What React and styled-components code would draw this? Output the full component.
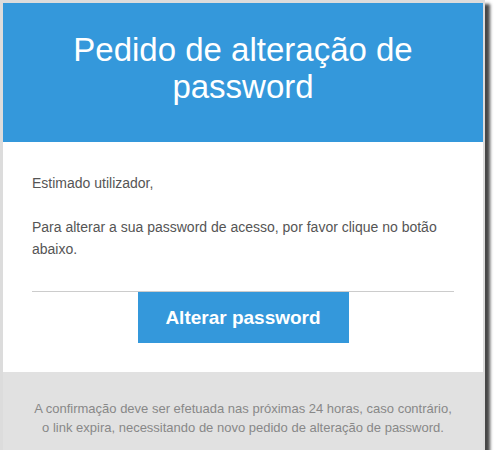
import React from "react";
import styled, { createGlobalStyle } from "styled-components";

const GlobalStyle = createGlobalStyle`
    html, body {
        margin: 0;
        padding: 0;
        background: #ffffff;
    }
    body {
        font-family: "Liberation Sans", Arial, sans-serif;
    }
`;

const Frame = styled.div`
    width: 480px;
    border-style: solid;
    border-color: #dcdcdc;
    border-width: 3px 2px 0 3px;
    box-shadow: 5px 4px 3px rgba(40, 40, 40, 0.85);
`;

const Header = styled.div`
    background: #3498db;
    color: #ffffff;
    text-align: center;
    padding: 28px 40px 37px;
`;

const Title = styled.h1`
    margin: 0;
    font-size: 33px;
    font-weight: normal;
    line-height: 37px;
`;

const Body = styled.div`
    background: #ffffff;
    padding: 30px 29px 29px;
    display: flex;
    flex-direction: column;
`;

const Paragraph = styled.p`
    margin: 0 0 ${p => (p.$last ? "31px" : "22px")};
    font-size: 14px;
    line-height: 22px;
    color: #555555;
`;

const Divider = styled.hr`
    margin: 0;
    border: 0;
    border-top: 1px solid #cccccc;
    width: 100%;
`;

const Button = styled.a`
    align-self: center;
    display: flex;
    align-items: center;
    justify-content: center;
    width: 211px;
    height: 51px;
    background: #3498db;
    color: #ffffff;
    font-size: 19px;
    font-weight: bold;
    text-decoration: none;
`;

const Footer = styled.div`
    background: #e1e1e1;
    padding: 27px 20px 13px;
    text-align: center;
    font-size: 13px;
    line-height: 19px;
    color: #888888;
`;

export default function App() {
    return (
        <>
            <GlobalStyle />
            <Frame>
                <Header>
                    <Title>Pedido de alteração de password</Title>
                </Header>
                <Body>
                    <Paragraph>Estimado utilizador,</Paragraph>
                    <Paragraph $last>
                        Para alterar a sua password de acesso, por favor clique no botão abaixo.
                    </Paragraph>
                    <Divider />
                    <Button href="#">Alterar password</Button>
                </Body>
                <Footer>
                    A confirmação deve ser efetuada nas próximas 24 horas, caso contrário,
                    <br />
                    o link expira, necessitando de novo pedido de alteração de password.
                </Footer>
            </Frame>
        </>
    );
}
